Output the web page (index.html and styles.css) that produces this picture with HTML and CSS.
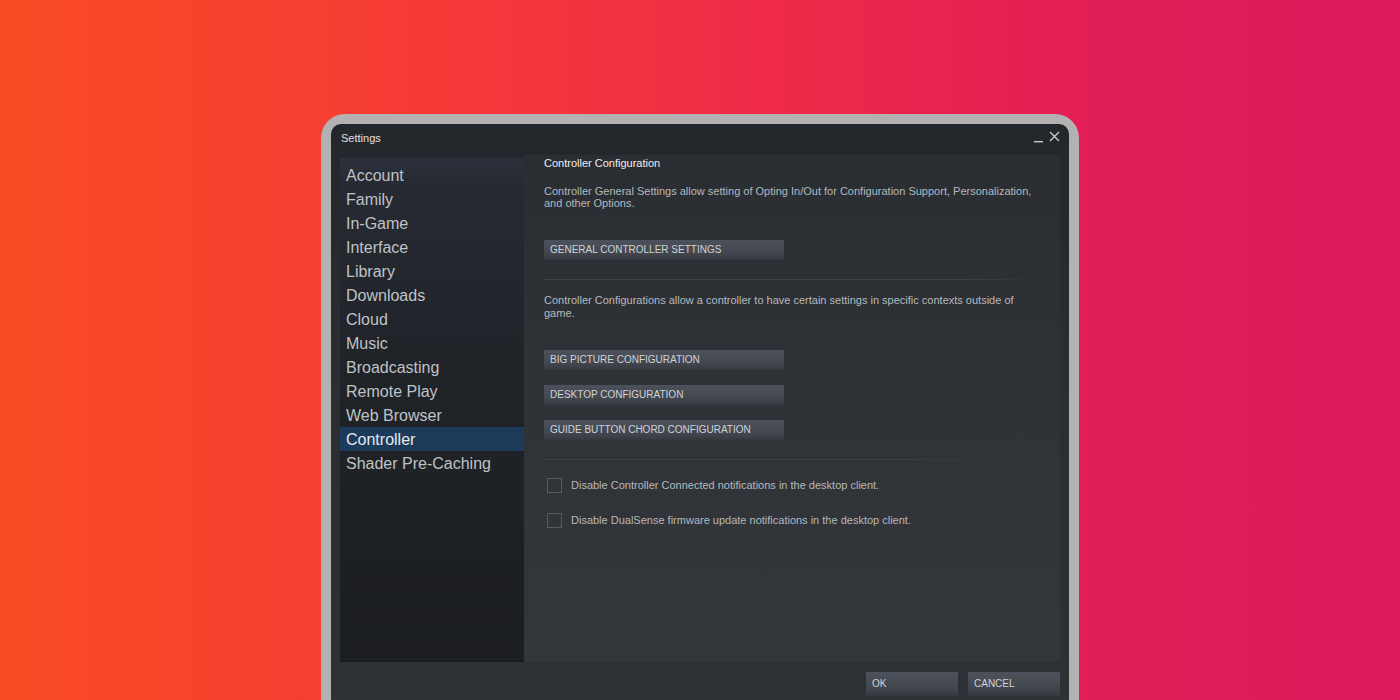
FILE: index.html
```html
<!DOCTYPE html>
<html>
<head>
<meta charset="utf-8">
<title>Settings</title>
<link rel="stylesheet" href="styles.css">
</head>
<body>
<div class="bezel">
  <div class="window">
    <div class="titlebar">
      <span class="title">Settings</span>
      <div class="controls">
        <svg class="min" width="9" height="10" viewBox="0 0 9 10"><rect x="0" y="8" width="9" height="1.4" fill="#c9c9c9"/></svg>
        <svg class="close" width="11" height="11" viewBox="0 0 11 11"><path d="M1 1 L10 10 M10 1 L1 10" stroke="#c9c9c9" stroke-width="1.4" fill="none"/></svg>
      </div>
    </div>
    <div class="main">
      <nav class="sidebar">
        <div class="nav-item">Account</div>
        <div class="nav-item">Family</div>
        <div class="nav-item">In-Game</div>
        <div class="nav-item">Interface</div>
        <div class="nav-item">Library</div>
        <div class="nav-item">Downloads</div>
        <div class="nav-item">Cloud</div>
        <div class="nav-item">Music</div>
        <div class="nav-item">Broadcasting</div>
        <div class="nav-item">Remote Play</div>
        <div class="nav-item">Web Browser</div>
        <div class="nav-item active">Controller</div>
        <div class="nav-item">Shader Pre-Caching</div>
      </nav>
      <section class="content">
        <div class="heading">Controller Configuration</div>
        <p class="desc first">Controller General Settings allow setting of Opting In/Out for Configuration Support, Personalization, and other Options.</p>
        <div class="btn wide">General Controller Settings</div>
        <div class="sep long"></div>
        <p class="desc second">Controller Configurations allow a controller to have certain settings in specific contexts outside of game.</p>
        <div class="btn-stack">
          <div class="btn wide">Big Picture Configuration</div>
          <div class="btn wide">Desktop Configuration</div>
          <div class="btn wide">Guide Button Chord Configuration</div>
        </div>
        <div class="sep short"></div>
        <div class="checks">
          <label class="check"><span class="box"></span><span class="check-text">Disable Controller Connected notifications in the desktop client.</span></label>
          <label class="check"><span class="box"></span><span class="check-text">Disable DualSense firmware update notifications in the desktop client.</span></label>
        </div>
      </section>
    </div>
    <div class="footer">
      <div class="btn footer-btn">OK</div>
      <div class="btn footer-btn">Cancel</div>
    </div>
  </div>
</div>
</body>
</html>
```
FILE: styles.css
```css
html, body {
  margin: 0;
  padding: 0;
}
body {
  width: 1400px;
  height: 700px;
  overflow: hidden;
  background: linear-gradient(to right, #f94b23 0%, #f5383a 35%, #ee2a48 55%, #e21e56 78%, #dc1a5d 100%);
  font-family: "Liberation Sans", Arial, sans-serif;
}
.bezel {
  margin: 114px 0 0 321px;
  width: 738px;
  height: 600px;
  padding: 10px 10px 0 10px;
  background: #b3b1b1;
  border-radius: 24px 24px 0 0;
}
.window {
  height: 600px;
  background: linear-gradient(to bottom, #23262b 0%, #2a2d32 40%, #2e3136 100%);
  border-radius: 10px 10px 0 0;
  display: flex;
  flex-direction: column;
}
.titlebar {
  height: 31px;
  display: flex;
  align-items: center;
  justify-content: space-between;
  padding: 0 9px 0 10px;
}
.title {
  font-size: 11px;
  color: #e2e2e2;
  margin-top: -3px;
}
.controls {
  display: flex;
  align-items: flex-end;
  gap: 6px;
  margin-top: -6px;
}
.controls .min { margin-bottom: -1px; }
.main {
  display: flex;
  height: 507px;
  margin: 0 11px 0 9px;
}
.sidebar {
  width: 184px;
  flex: none;
  padding-top: 8px;
  box-sizing: border-box;
  background: linear-gradient(to bottom, #1f2227 0px, #2b303a 4px, #262a33 30px, #202328 200px, #1c1e21 100%);
  border-bottom: 1px solid #17191b;
}
.nav-item {
  height: 24px;
  line-height: 26px;
  padding-left: 6px;
  font-size: 16px;
  color: #bfc2c6;
  white-space: nowrap;
  overflow: hidden;
}
.nav-item.active {
  background: #1c3b5a;
  color: #e6e9ec;
}
.content {
  flex: 1;
  padding: 2px 20px 0 20px;
  background: linear-gradient(to bottom, #2a2d32 0%, #2f3237 50%, #33363b 100%);
}
.heading {
  font-size: 11px;
  line-height: 13px;
  color: #eeeeee;
}
.desc {
  margin: 0;
  font-size: 11px;
  line-height: 12px;
  color: #b5b9bd;
}
.desc.first { margin-top: 15px; margin-bottom: 31px; }
.desc.second { margin-top: 14px; margin-bottom: 30px; line-height: 13px; }
.btn {
  box-sizing: border-box;
  height: 20px;
  line-height: 19px;
  padding-left: 6px;
  font-size: 10px;
  text-transform: uppercase;
  color: #cfd3d9;
  background: linear-gradient(to bottom, #4c515b 0%, #444850 60%, #3b3e45 88%, #33363b 100%);
}
.btn.wide { width: 240px; }
.btn-stack {
  display: flex;
  flex-direction: column;
  gap: 15px;
}
.sep {
  height: 1px;
  margin-top: 19px;
}
.sep.long {
  background: linear-gradient(to right, #3e4248 0%, #3e4248 85%, rgba(62,66,72,0) 100%);
  width: 496px;
}
.sep.short {
  background: linear-gradient(to right, #3c4046 0%, #3c4046 75%, rgba(60,64,70,0) 100%);
  width: 470px;
}
.checks {
  margin-top: 18px;
  display: flex;
  flex-direction: column;
  gap: 20px;
}
.check {
  display: flex;
  align-items: center;
  height: 15px;
  padding-left: 3px;
}
.box {
  box-sizing: border-box;
  width: 15px;
  height: 15px;
  border: 1px solid #585c62;
  margin-right: 9px;
  flex: none;
}
.check-text {
  font-size: 11px;
  line-height: 13px;
  margin-top: -1px;
  color: #b5b9bd;
}
.footer {
  display: flex;
  justify-content: flex-end;
  gap: 10px;
  padding: 10px 9px 0 0;
}
.footer-btn {
  width: 92px;
  height: 24px;
  line-height: 24px;
}
```
